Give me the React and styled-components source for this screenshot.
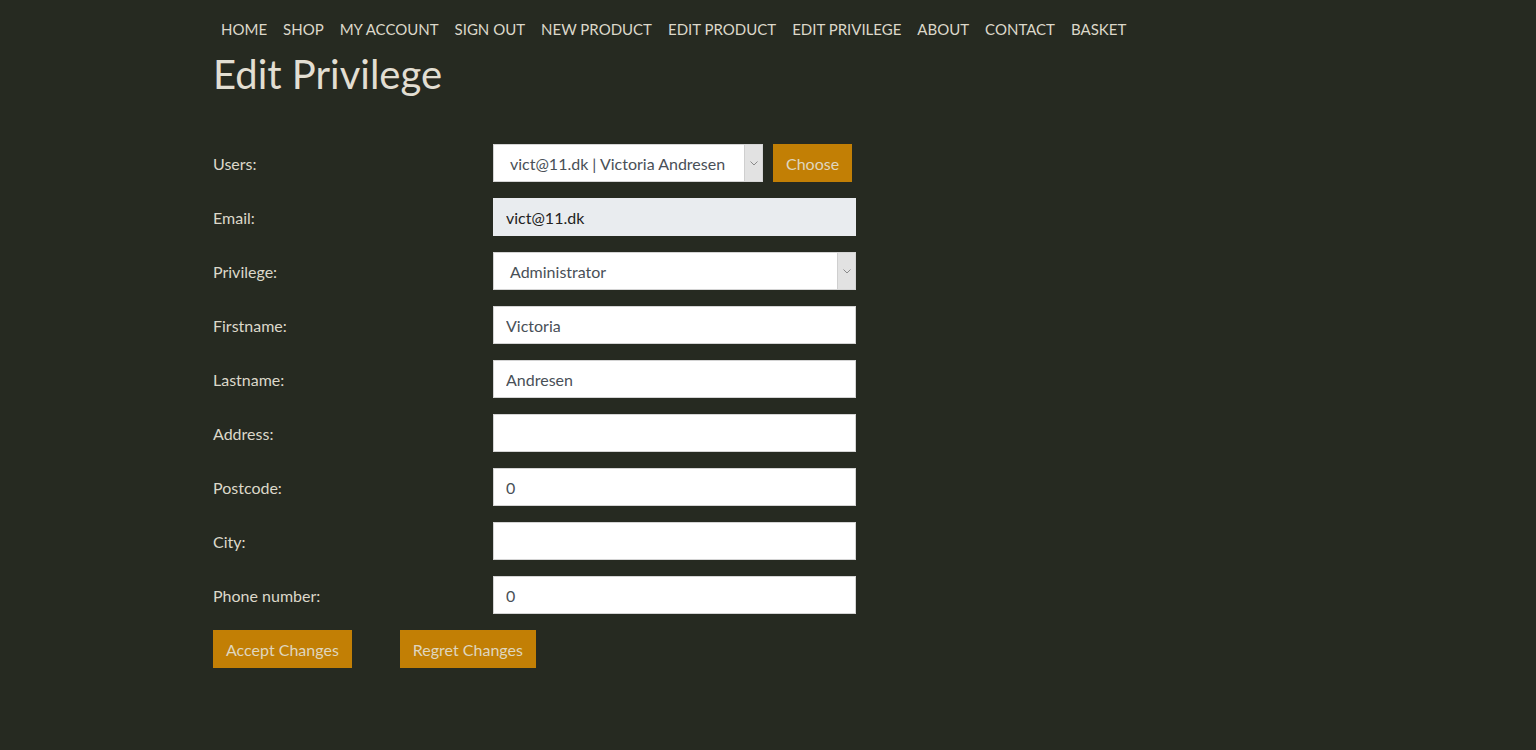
import React from 'react';
import styled, { createGlobalStyle } from 'styled-components';

const GlobalStyle = createGlobalStyle`
  *, *::before, *::after {
    box-sizing: border-box;
  }
  body {
    margin: 0;
    background: #262a21;
    font-family: "Segoe UI", Lato, "Noto Sans", sans-serif;
    color: #dcd8ca;
  }
`;

const Container = styled.div`
  max-width: 1140px;
  margin: 0 auto;
  padding: 10px 15px 60px;
`;

const NavList = styled.ul`
  display: flex;
  list-style: none;
  margin: 0;
  padding: 0;
`;

const NavLink = styled.a`
  display: block;
  padding: 0 8px;
  line-height: 38px;
  font-size: 15px;
  color: #dcd8ca;
  text-decoration: none;
  text-transform: uppercase;
`;

const Title = styled.h1`
  margin: 2px 0 46px;
  font-size: 40px;
  font-weight: 400;
  line-height: 48px;
  color: #e2ded2;
`;

const Form = styled.form`
  display: flex;
  flex-direction: column;
  gap: 16px;
`;

const Row = styled.div`
  display: grid;
  grid-template-columns: 280px 363px;
  align-items: center;
`;

const Label = styled.label`
  font-size: 16px;
`;

const Field = styled.div`
  display: flex;
  gap: 10px;
`;

const Input = styled.input`
  width: ${p => p.$width || '363px'};
  height: 38px;
  margin: 0;
  padding: 0 12px;
  font: inherit;
  font-size: 16px;
  color: ${p => (p.disabled ? '#222' : '#495057')};
  background: ${p => (p.disabled ? '#e9ecef' : '#fff')};
  border: 1px solid ${p => (p.disabled ? '#e9ecef' : '#d4d4d4')};
  border-radius: 0;
  outline: none;
`;

const Select = styled.div`
  display: flex;
  align-items: center;
  width: ${p => p.$width || '363px'};
  height: 38px;
  background: #fff;
  border: 1px solid #d4d4d4;
  font-size: 16px;
  color: #495057;
`;

const SelectText = styled.span`
  flex: 1;
  padding-left: 16px;
  white-space: nowrap;
`;

const Arrow = styled.span`
  display: flex;
  align-items: center;
  justify-content: center;
  width: 18px;
  height: 100%;
  background: #e2e2e2;
  border-left: 1px solid #cfcfcf;
`;

const Button = styled.button`
  height: 38px;
  padding: 0 13px;
  border: none;
  border-radius: 0;
  background: #c27f05;
  color: #dfd6bf;
  font: inherit;
  font-size: 16px;
  cursor: pointer;
`;

const Actions = styled.div`
  display: flex;
  gap: 48px;
`;

const Chevron = () => (
  <svg width="8" height="5" viewBox="0 0 8 5">
    <path d="M0.5 0.5 L4 4 L7.5 0.5" fill="none" stroke="#8a8a8a" strokeWidth="1" />
  </svg>
);

const navItems = ['Home', 'Shop', 'My account', 'Sign out', 'New product', 'Edit product', 'Edit privilege', 'About', 'Contact', 'Basket'];

const fields = [
  { label: 'Firstname:', value: 'Victoria' },
  { label: 'Lastname:', value: 'Andresen' },
  { label: 'Address:', value: '' },
  { label: 'Postcode:', value: '0' },
  { label: 'City:', value: '' },
  { label: 'Phone number:', value: '0' },
];

export default function App() {
  return (
    <>
      <GlobalStyle />
      <Container>
        <nav>
          <NavList>
            {navItems.map(item => (
              <li key={item}>
                <NavLink href="#">{item}</NavLink>
              </li>
            ))}
          </NavList>
        </nav>
        <Title>Edit Privilege</Title>
        <Form onSubmit={e => e.preventDefault()}>
          <Row>
            <Label>Users:</Label>
            <Field>
              <Select $width="270px">
                <SelectText>vict@11.dk | Victoria Andresen</SelectText>
                <Arrow><Chevron /></Arrow>
              </Select>
              <Button type="button">Choose</Button>
            </Field>
          </Row>
          <Row>
            <Label>Email:</Label>
            <Input disabled defaultValue="vict@11.dk" />
          </Row>
          <Row>
            <Label>Privilege:</Label>
            <Select>
              <SelectText>Administrator</SelectText>
              <Arrow><Chevron /></Arrow>
            </Select>
          </Row>
          {fields.map(f => (
            <Row key={f.label}>
              <Label>{f.label}</Label>
              <Input defaultValue={f.value} />
            </Row>
          ))}
          <Actions>
            <Button type="submit">Accept Changes</Button>
            <Button type="button">Regret Changes</Button>
          </Actions>
        </Form>
      </Container>
    </>
  );
}
